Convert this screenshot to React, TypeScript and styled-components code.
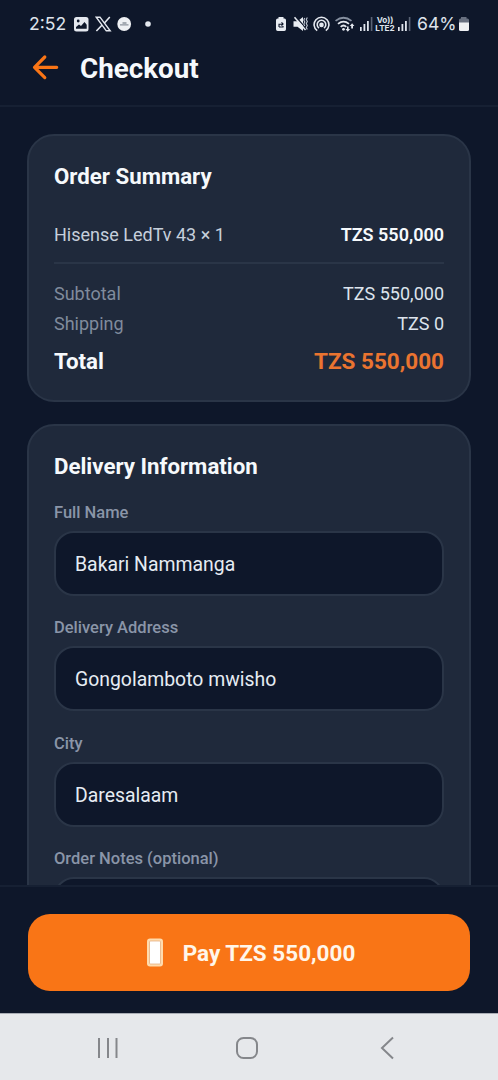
import React from 'react';
import styled, { createGlobalStyle } from 'styled-components';

const GlobalStyle = createGlobalStyle`
  * { box-sizing: border-box; }
  body { margin: 0; background: #0e172a; font-family: Roboto, sans-serif; }
`;

const Screen = styled.div`
  width: 498px;
  height: 1080px;
  display: flex;
  flex-direction: column;
  background: #0e172a;
  overflow: hidden;
`;

const StatusBar = styled.div`
  height: 48px;
  flex: none;
  display: flex;
  align-items: center;
  justify-content: space-between;
  padding: 0 28px 0 29px;
  color: #dfe4ec;
  font: 400 17.6px/20px Inter, sans-serif;
`;

const StatusGroup = styled.div`
  display: flex;
  align-items: center;
  svg { display: block; flex: none; }
`;

const Clock = styled.span`
  width: 44px;
`;

const Battery = styled.span`
  width: 41px;
`;

const Gap = styled.span<{ $width: number }>`
  width: ${(p) => p.$width}px;
`;

const VoLte = styled.span`
  display: flex;
  flex-direction: column;
  align-items: center;
  width: 20px;
  margin: 0 3px 0 2px;
  font: 700 8.2px/8px Inter, sans-serif;
`;

const Header = styled.header`
  height: 59px;
  flex: none;
  display: flex;
  align-items: flex-start;
  padding: 6px 0 0 32px;
  border-bottom: 2px solid #162033;
`;

const PageTitle = styled.h1`
  margin: 0 0 0 21px;
  color: #f6f9fc;
  font-size: 27.8px;
  font-weight: 700;
  line-height: 30px;
`;

const Content = styled.main`
  flex: 1;
  min-height: 0;
  overflow: hidden;
  display: flex;
  flex-direction: column;
  gap: 22px;
  padding: 27px 27px 0;
`;

const Card = styled.section<{ $height: number }>`
  flex: none;
  height: ${(p) => p.$height}px;
  padding: 25px 25px 0;
  border: 2px solid #2a3547;
  border-radius: 27px;
  background: #1f293b;
`;

const CardTitle = styled.h2`
  margin: 0;
  color: #f6f9fc;
  font-size: 22.25px;
  font-weight: 700;
  line-height: 30px;
`;

const ItemRow = styled.div`
  display: flex;
  justify-content: space-between;
  margin-top: 31px;
  padding-bottom: 14px;
  border-bottom: 2px solid #2a3547;
  color: #c6cfdb;
  font-size: 18px;
  line-height: 26px;
`;

const ItemPrice = styled.span`
  color: #f6f9fc;
  font-weight: 600;
`;

const Sums = styled.div`
  margin-top: 15px;
`;

const SumRow = styled.div`
  display: flex;
  justify-content: space-between;
  color: #808b9d;
  font-size: 18px;
  line-height: 30px;
`;

const SumValue = styled.span`
  color: #dde4ed;
`;

const TotalRow = styled.div`
  display: flex;
  justify-content: space-between;
  margin-top: 7px;
  color: #f6f9fc;
  font-size: 22.3px;
  font-weight: 700;
  line-height: 30px;
`;

const TotalValue = styled.span`
  color: #ea7430;
  font-size: 22.5px;
`;

const Field = styled.label`
  display: block;
  height: 115.4px;
`;

const Fields = styled.div`
  padding-top: 22px;
`;

const FieldLabel = styled.span`
  display: block;
  color: #8a95a8;
  font-size: 16.5px;
  font-weight: 500;
  line-height: 20px;
`;

const FieldInput = styled.input`
  display: block;
  width: 100%;
  height: 65px;
  margin-top: 8px;
  padding: 2px 19px 0;
  border: 2px solid #2a3547;
  border-radius: 20px;
  outline: none;
  background: #0e172a;
  color: #e6ecf3;
  font: 400 19.4px/26px Roboto, sans-serif;
`;

const Footer = styled.footer`
  flex: none;
  height: 128px;
  padding: 27px 28px 0;
  border-top: 2px solid #162033;
`;

const PayButton = styled.button`
  display: flex;
  align-items: center;
  justify-content: center;
  gap: 20px;
  width: 100%;
  height: 77px;
  padding: 0 0 0 4px;
  border: 0;
  border-radius: 22px;
  background: #f97516;
  color: #fff6ea;
  font: 700 22.5px/30px Roboto, sans-serif;
`;

const NavBar = styled.nav`
  flex: none;
  display: grid;
  grid-template-columns: 139px 140px auto;
  justify-content: start;
  align-items: center;
  height: 67px;
  padding: 2px 0 0 96px;
  border-top: 1px solid #a9adb5;
  background: #e6e8eb;
`;

const SignalIcon = () => (
  <svg width="13" height="16" viewBox="0 0 13 16" fill="#dfe4ec">
    <rect x="0" y="11" width="1.7" height="4" />
    <rect x="3.5" y="8" width="1.8" height="7" />
    <rect x="7" y="5" width="1.8" height="10" />
    <rect x="10.8" y="1" width="1.6" height="14" fill="#5a6375" />
  </svg>
);

const fields = [
  { label: 'Full Name', value: 'Bakari Nammanga' },
  { label: 'Delivery Address', value: 'Gongolamboto mwisho' },
  { label: 'City', value: 'Daresalaam' },
  { label: 'Order Notes (optional)', value: '' },
];

export default function App() {
  return (
    <Screen>
      <GlobalStyle />
      <StatusBar>
        <StatusGroup>
          <Clock>2:52</Clock>
          <svg width="16" height="16" viewBox="0 0 16 16">
            <rect x="1" y="1" width="14.5" height="14.5" rx="2.5" fill="#e4e8ef" />
            <circle cx="5.2" cy="5" r="1.4" fill="#0e172a" />
            <path d="M3 12.8V11l3-2.5 2 1.6L11.5 6l2.2 2.8v4z" fill="#0e172a" />
          </svg>
          <Gap $width={6} />
          <svg width="17" height="16" viewBox="0 0 17 16" fill="none" stroke="#e4e8ef">
            <path d="M1.2 1.2H5l10.2 13.6h-3.9z" strokeWidth="1.4" />
            <path d="M14.8 1L9.2 7.3M6.9 9.3L1.4 15" strokeWidth="1.6" />
          </svg>
          <Gap $width={5} />
          <svg width="15" height="16" viewBox="0 0 15 16">
            <circle cx="7.2" cy="8" r="6.9" fill="#eef0f3" />
            <path d="M3 8.8h8.5M5.500 7h4" stroke="#8c929d" strokeWidth="1.3" />
          </svg>
          <Gap $width={13} />
          <svg width="6" height="6" viewBox="0 0 6 6">
            <circle cx="3" cy="3" r="2.8" fill="#e4e8ef" />
          </svg>
        </StatusGroup>
        <StatusGroup>
          <svg width="12" height="16" viewBox="0 0 12 16">
            <path d="M3.500 1h5v1.500h1A1.700 1.700 0 0 1 11 4.200v9.100a1.700 1.700 0 0 1-1.700 1.700H2.700A1.700 1.700 0 0 1 1 13.300V4.200A1.700 1.700 0 0 1 2.700 2.500h.8z" fill="#e8ecf2" />
            <path d="M4 11V8.200h3.600M6.500 6.300L8.100 8 6.500 9.700M8 10v1H4" fill="none" stroke="#0e172a" strokeWidth="1.100" />
          </svg>
          <Gap $width={6} />
          <svg width="16" height="16" viewBox="0 0 16 16">
            <path d="M0.500 5.200h4L10 1v14L4.500 10.700h-4z" fill="#e8ecf2" />
            <path d="M2.600 0.500L14 13.500" stroke="#0e172a" strokeWidth="1.200" />
            <path d="M1.500 1.200L12.500 14" stroke="#e8ecf2" strokeWidth="1.500" />
            <path d="M11.800 2l-1 2 1 2-1 2 1 2M14.300 1.500l-1 2 1 2-1 2 1 2-1 2 1 2" fill="none" stroke="#c3cad5" strokeWidth="1.100" />
          </svg>
          <Gap $width={4} />
          <svg width="17" height="16" viewBox="0 0 17 16" fill="none" stroke="#e4e8ef" strokeWidth="1.600">
            <path d="M4.200 14.700A7.400 7.400 0 1 1 12.800 14.700" />
            <path d="M6 12.100A4.300 4.300 0 1 1 11 12.100" />
            <circle cx="8.500" cy="8.900" r="1.500" fill="#e4e8ef" />
          </svg>
          <Gap $width={5} />
          <svg width="20" height="16" viewBox="0 0 20 16" fill="none" stroke="#e4e8ef" strokeWidth="1.800">
            <path d="M0.500 4.900Q8.500-1.500 16.500 4.900" stroke="#858f9f" />
            <path d="M3 7.900Q8.500 3.400 14 7.900" />
            <path d="M5.700 10.800Q8.500 8.300 11.300 10.800" />
            <circle cx="8.500" cy="13.300" r="1.400" fill="#e4e8ef" stroke="none" />
            <path d="M12 10.500v2.500h-1.500l2.300 2.700 2.300-2.700h-1.500v-2.500zM16.200 12.500V10h-1.400l2.300-2.700L19.400 10H18v2.500z" fill="#e4e8ef" stroke="none" />
          </svg>
          <Gap $width={5} />
          <SignalIcon />
          <VoLte>
            <span>Vo))</span>
            <span>LTE2</span>
          </VoLte>
          <SignalIcon />
          <Gap $width={6} />
          <Battery>64%</Battery>
          <svg width="12" height="16" viewBox="0 0 12 16">
            <path d="M3 1h5.500v1.500h1A1.500 1.500 0 0 1 11 4v3H1V4a1.500 1.500 0 0 1 1.500-1.500H3z" fill="#687080" />
            <path d="M1 6.500h10v7a1.500 1.500 0 0 1-1.500 1.500h-7A1.500 1.500 0 0 1 1 13.500z" fill="#eef0f3" />
          </svg>
        </StatusGroup>
      </StatusBar>
      <Header>
        <svg width="27" height="26" viewBox="0 0 27 26" fill="none" stroke="#f97516" strokeWidth="3.200" strokeLinecap="round" strokeLinejoin="round">
          <path d="M24.700 13.300H2.500M12.800 3L2.500 13.300 12.800 23.600" />
        </svg>
        <PageTitle>Checkout</PageTitle>
      </Header>
      <Content>
        <Card $height={268}>
          <CardTitle>Order Summary</CardTitle>
          <ItemRow>
            <span>Hisense LedTv 43 × 1</span>
            <ItemPrice>TZS 550,000</ItemPrice>
          </ItemRow>
          <Sums>
            <SumRow>
              <span>Subtotal</span>
              <SumValue>TZS 550,000</SumValue>
            </SumRow>
            <SumRow>
              <span>Shipping</span>
              <SumValue>TZS 0</SumValue>
            </SumRow>
            <TotalRow>
              <span>Total</span>
              <TotalValue>TZS 550,000</TotalValue>
            </TotalRow>
          </Sums>
        </Card>
        <Card $height={560}>
          <CardTitle>Delivery Information</CardTitle>
          <Fields>
            {fields.map((f) => (
              <Field key={f.label}>
                <FieldLabel>{f.label}</FieldLabel>
                <FieldInput defaultValue={f.value} />
              </Field>
            ))}
          </Fields>
        </Card>
      </Content>
      <Footer>
        <PayButton>
          <svg width="16" height="29" viewBox="0 0 16 29">
            <rect x="0" y="0.500" width="16" height="28" rx="3" fill="#ffdcae" />
            <rect x="2.500" y="3" width="11" height="23" rx="1" fill="#fff" stroke="#e3a875" strokeWidth="0.700" />
          </svg>
          <span>Pay TZS 550,000</span>
        </PayButton>
      </Footer>
      <NavBar>
        <svg width="24" height="22" viewBox="0 0 24 22" stroke="#85878b" strokeWidth="2">
          <path d="M3 1v20M12 1v20M20.500 1v20" />
        </svg>
        <svg width="24" height="24" viewBox="0 0 24 24" fill="none" stroke="#85878b" strokeWidth="2">
          <rect x="2" y="2" width="20" height="20" rx="6.500" />
        </svg>
        <svg width="24" height="24" viewBox="0 0 24 24" fill="none" stroke="#85878b" strokeWidth="2">
          <path d="M18 1.500L7 12l11 10.500" />
        </svg>
      </NavBar>
    </Screen>
  );
}
